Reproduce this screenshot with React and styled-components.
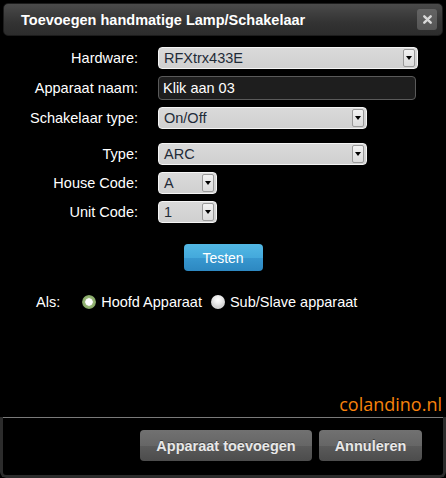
import React from "react";
import styled, { createGlobalStyle } from "styled-components";

const Global = createGlobalStyle`
  html, body { margin: 0; padding: 0; background: #000; }
  body { font-family: "Liberation Sans", Arial, sans-serif; }
  * { box-sizing: border-box; }
`;

const Dialog = styled.div`
  width: 446px;
  height: 478px;
  background: #000;
  display: flex;
  flex-direction: column;
  border-radius: 6px;
  overflow: hidden;
`;

const TitleBar = styled.div`
  margin: 3px 3px 0;
  height: 33px;
  padding: 2px 5px 0 17px;
  display: flex;
  align-items: center;
  justify-content: space-between;
  border-radius: 5px;
  border: 1px solid #1c1c1c;
  background: linear-gradient(#4a4a4a, #333 60%, #2c2c2c);
`;

const Title = styled.span`
  color: #fff;
  font-weight: bold;
  font-size: 14.5px;
  line-height: 29px;
`;

const CloseBtn = styled.button`
  width: 20px;
  height: 21px;
  margin-top: -2px;
  padding: 0;
  border: none;
  border-radius: 3px;
  background: linear-gradient(#646464, #555);
  display: flex;
  align-items: center;
  justify-content: center;
`;

const Body = styled.div`
  flex: 1;
  margin: 0 3px;
  padding-top: 11px;
  display: flex;
  flex-direction: column;
`;

const Form = styled.div`
  display: grid;
  grid-template-columns: 135px 1fr;
  column-gap: 20px;
  row-gap: 7px;
  align-items: center;
`;

const Label = styled.label`
  color: #fff;
  font-size: 14.5px;
  text-align: right;
  margin-top: ${(p) => (p.$extra ? "7px" : "0")};
`;

const Control = styled.div`
  margin-top: ${(p) => (p.$extra ? "7px" : "0")};
  display: flex;
`;

const SelectBox = styled.div`
  position: relative;
  width: ${(p) => p.$w}px;
  height: 22px;
  border: 1px solid #f4f4f4;
  border-radius: 4px;
  background: linear-gradient(#dadada, #d0d0d0);
  color: #1f2b38;
  font-size: 14.5px;
  line-height: 20px;
  padding-left: 5px;
`;

const Arrow = styled.span`
  position: absolute;
  right: 2px;
  top: 1px;
  bottom: 1px;
  width: 12px;
  border: 1px solid #9a9a9a;
  border-radius: 2px;
  background: linear-gradient(#f2f2f2, #dcdcdc);
  display: flex;
  align-items: center;
  justify-content: center;
  &::after {
    content: "";
    border-left: 3px solid transparent;
    border-right: 3px solid transparent;
    border-top: 4px solid #000;
  }
`;

const TextInput = styled.input`
  width: 258px;
  height: 24px;
  border: 1px solid #5a5a5a;
  border-radius: 4px;
  background: #1e1e1e;
  color: #fff;
  font-family: "Liberation Sans", Arial, sans-serif;
  font-size: 14.5px;
  padding: 0 4px;
  outline: none;
`;

const TestButton = styled.button`
  align-self: center;
  margin-top: 21px;
  width: 79px;
  height: 27px;
  border: none;
  border-radius: 4px;
  color: #fff;
  font-family: "Liberation Sans", Arial, sans-serif;
  font-size: 14px;
  background: linear-gradient(#52b8e4, #44a9dc 50%, #3797cf 52%, #2d88c1);
  padding: 0;
`;

const AsRow = styled.div`
  margin-top: 23px;
  padding-left: 33px;
  display: flex;
  align-items: center;
  height: 16px;
  color: #fff;
  font-size: 14.5px;
`;

const AsLabel = styled.span`
  margin-right: 22px;
`;

const Radio = styled.span`
  width: 14px;
  height: 14px;
  border-radius: 50%;
  margin-right: 5px;
  flex: none;
  background: ${(p) =>
    p.$checked
      ? "radial-gradient(circle, #fff 0 3px, #f0f0f0 3.5px, #9bba7c 4px, #86a766 6.5px, #5a6e48 7px)"
      : "radial-gradient(circle at 50% 35%, #fff 0, #f2f2f2 3px, #d6d6d6 7px)"};
`;

const RadioText = styled.span`
  margin-right: ${(p) => (p.$gap ? "9px" : "0")};
`;

const Brand = styled.div`
  margin-top: auto;
  text-align: right;
  padding-right: 1px;
  color: #f7820c;
  font-family: "Open Sans", sans-serif;
  font-size: 18px;
  line-height: 20px;
  margin-bottom: 3px;
`;

const Footer = styled.div`
  height: 61px;
  border: 3px solid #2c2c2c;
  border-top: none;
  border-radius: 0 0 6px 6px;
`;

const FooterInner = styled.div`
  height: 100%;
  border-top: 1px solid #7a7a7a;
  display: flex;
  justify-content: flex-end;
  align-items: flex-start;
  gap: 7px;
  padding: 12px 21px 0 0;
`;

const FooterButton = styled.button`
  width: ${(p) => p.$w}px;
  height: 31px;
  border: none;
  border-radius: 4px;
  color: #e8e8e8;
  font-family: "Liberation Sans", Arial, sans-serif;
  font-weight: bold;
  font-size: 14.5px;
  text-shadow: 0 -1px 0 rgba(0, 0, 0, 0.4);
  background: linear-gradient(#717171, #666 50%, #5a5a5a 52%, #4c4c4c);
  padding: 0;
`;

const Select = ({ w, children }) => (
  <SelectBox $w={w}>
    {children}
    <Arrow />
  </SelectBox>
);

export default function App() {
  return (
    <>
      <Global />
      <Dialog>
        <TitleBar>
          <Title>Toevoegen handmatige Lamp/Schakelaar</Title>
          <CloseBtn aria-label="close">
            <svg width="9" height="9" viewBox="0 0 9 9">
              <path d="M1.3 1.3 L7.7 7.7 M7.7 1.3 L1.3 7.7" stroke="#d8d8d8" strokeWidth="2.4" strokeLinecap="round" />
            </svg>
          </CloseBtn>
        </TitleBar>
        <Body>
          <Form>
            <Label>Hardware:</Label>
            <Control>
              <Select w={260}>RFXtrx433E</Select>
            </Control>
            <Label>Apparaat naam:</Label>
            <Control>
              <TextInput defaultValue="Klik aan 03" />
            </Control>
            <Label>Schakelaar type:</Label>
            <Control>
              <Select w={209}>On/Off</Select>
            </Control>
            <Label $extra>Type:</Label>
            <Control $extra>
              <Select w={209}>ARC</Select>
            </Control>
            <Label>House Code:</Label>
            <Control>
              <Select w={59}>A</Select>
            </Control>
            <Label>Unit Code:</Label>
            <Control>
              <Select w={59}>1</Select>
            </Control>
          </Form>
          <TestButton>Testen</TestButton>
          <AsRow>
            <AsLabel>Als:</AsLabel>
            <Radio $checked />
            <RadioText $gap>Hoofd Apparaat</RadioText>
            <Radio />
            <RadioText>Sub/Slave apparaat</RadioText>
          </AsRow>
          <Brand>colandino.nl</Brand>
        </Body>
        <Footer>
          <FooterInner>
            <FooterButton $w={172}>Apparaat toevoegen</FooterButton>
            <FooterButton $w={103}>Annuleren</FooterButton>
          </FooterInner>
        </Footer>
      </Dialog>
    </>
  );
}
